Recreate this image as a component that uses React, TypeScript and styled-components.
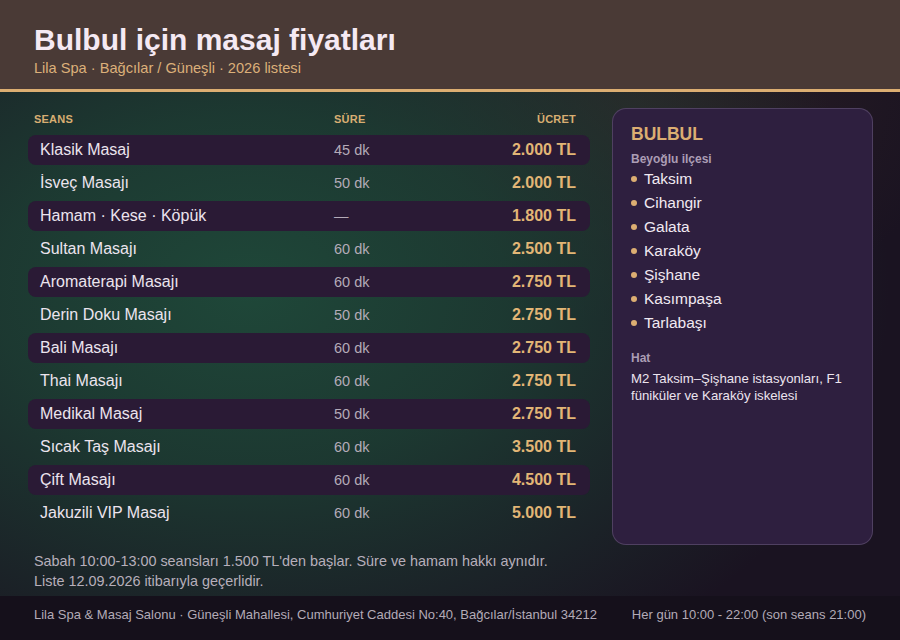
import React from 'react';
import styled, { createGlobalStyle } from 'styled-components';

const GlobalStyle = createGlobalStyle`
  html, body {
    margin: 0;
    padding: 0;
    background: #17111d;
  }
  * {
    box-sizing: border-box;
  }
`;

const Page = styled.div`
  width: 900px;
  height: 640px;
  display: flex;
  flex-direction: column;
  font-family: 'Liberation Sans', Arial, sans-serif;
  color: #ece4ee;
  background:
    radial-gradient(ellipse 640px 440px at 250px 290px, rgba(31, 74, 58, 0.95) 0%, rgba(29, 66, 53, 0.8) 40%, rgba(26, 19, 33, 0) 100%),
    radial-gradient(ellipse 320px 220px at 640px 100px, rgba(58, 42, 40, 0.55) 0%, rgba(26, 19, 33, 0) 100%),
    #1a1321;
  overflow: hidden;
`;

const Header = styled.header`
  height: 92px;
  padding: 23px 34px 0;
  background: #4a3a36;
  border-bottom: 3px solid #dcae72;
`;

const Title = styled.h1`
  margin: 0;
  font-size: 30px;
  line-height: 34px;
  font-weight: 700;
  color: #f5e9f3;
`;

const Subtitle = styled.p`
  margin: 2px 0 0;
  font-size: 14.6px;
  line-height: 18px;
  color: #dcb07a;
`;

const Main = styled.main`
  flex: 1;
  padding: 16px 27px 0 28px;
  display: flex;
  flex-direction: column;
`;

const Columns = styled.div`
  display: grid;
  grid-template-columns: 562px 261px;
  gap: 22px;
  align-items: start;
`;

const Table = styled.div`
  display: flex;
  flex-direction: column;
  gap: 3px;
`;

const HeadRow = styled.div`
  display: grid;
  grid-template-columns: 300px 1fr auto;
  align-items: center;
  height: 21px;
  margin-bottom: 3px;
  padding: 0 14px 0 6px;
`;

const HeadCell = styled.span<{ $right?: boolean }>`
  font-size: 11px;
  font-weight: 700;
  letter-spacing: 0.02em;
  color: #d8ae72;
  text-align: ${p => (p.$right ? 'right' : 'left')};
`;

const Row = styled.div<{ $striped: boolean }>`
  display: grid;
  grid-template-columns: 294px 1fr auto;
  align-items: center;
  height: 30px;
  padding: 0 14px 0 12px;
  border-radius: 8px;
  background: ${p => (p.$striped ? '#2a1a35' : 'transparent')};
`;

const Name = styled.span`
  font-size: 16px;
  color: #ece4ee;
`;

const Duration = styled.span`
  font-size: 14.5px;
  color: #b4abb8;
`;

const Price = styled.span`
  font-size: 16px;
  font-weight: 700;
  color: #e2b676;
  text-align: right;
`;

const Card = styled.aside`
  height: 437px;
  padding: 14px 18px 16px;
  border-radius: 14px;
  background: #2e1f3f;
  border: 1px solid rgba(200, 180, 220, 0.22);
`;

const CardTitle = styled.h2`
  margin: 0;
  font-size: 17.5px;
  line-height: 22px;
  font-weight: 700;
  color: #dcae72;
`;

const CardLabel = styled.div<{ $gap?: number }>`
  margin-top: ${p => p.$gap ?? 0}px;
  font-size: 12px;
  line-height: 16px;
  font-weight: 700;
  color: #ab9db5;
`;

const Areas = styled.ul`
  list-style: none;
  margin: 0;
  padding: 0;
  display: flex;
  flex-direction: column;
`;

const Area = styled.li`
  display: flex;
  align-items: center;
  gap: 8px;
  height: 24px;
  font-size: 15.5px;
  color: #f1e9f2;

  &::before {
    content: '';
    width: 6px;
    height: 6px;
    margin-right: -1px;
    border-radius: 50%;
    background: #dcae72;
  }
`;

const LineText = styled.p`
  margin: 4px 0 0;
  font-size: 13.2px;
  line-height: 17px;
  color: #ece4ee;
`;

const Note = styled.p`
  margin: 6px 0 0 6px;
  font-size: 14.4px;
  line-height: 20px;
  color: #b7afbb;
`;

const Footer = styled.footer`
  height: 44px;
  padding: 0 34px 8px;
  display: flex;
  align-items: center;
  justify-content: space-between;
  background: #15101b;
  font-size: 13px;
  color: #b3abb7;
`;

const sessions = [
  { name: 'Klasik Masaj', dur: '45 dk', price: '2.000 TL' },
  { name: 'İsveç Masajı', dur: '50 dk', price: '2.000 TL' },
  { name: 'Hamam · Kese · Köpük', dur: '—', price: '1.800 TL' },
  { name: 'Sultan Masajı', dur: '60 dk', price: '2.500 TL' },
  { name: 'Aromaterapi Masajı', dur: '60 dk', price: '2.750 TL' },
  { name: 'Derin Doku Masajı', dur: '50 dk', price: '2.750 TL' },
  { name: 'Bali Masajı', dur: '60 dk', price: '2.750 TL' },
  { name: 'Thai Masajı', dur: '60 dk', price: '2.750 TL' },
  { name: 'Medikal Masaj', dur: '50 dk', price: '2.750 TL' },
  { name: 'Sıcak Taş Masajı', dur: '60 dk', price: '3.500 TL' },
  { name: 'Çift Masajı', dur: '60 dk', price: '4.500 TL' },
  { name: 'Jakuzili VIP Masaj', dur: '60 dk', price: '5.000 TL' },
];

const areas = ['Taksim', 'Cihangir', 'Galata', 'Karaköy', 'Şişhane', 'Kasımpaşa', 'Tarlabaşı'];

export default function App() {
  return (
    <Page>
      <GlobalStyle />
      <Header>
        <Title>Bulbul için masaj fiyatları</Title>
        <Subtitle>Lila Spa · Bağcılar / Güneşli · 2026 listesi</Subtitle>
      </Header>

      <Main>
        <Columns>
          <Table>
            <HeadRow>
              <HeadCell>SEANS</HeadCell>
              <HeadCell>SÜRE</HeadCell>
              <HeadCell $right>ÜCRET</HeadCell>
            </HeadRow>
            {sessions.map((s, i) => (
              <Row key={s.name} $striped={i % 2 === 0}>
                <Name>{s.name}</Name>
                <Duration>{s.dur}</Duration>
                <Price>{s.price}</Price>
              </Row>
            ))}
          </Table>

          <Card>
            <CardTitle>BULBUL</CardTitle>
            <CardLabel $gap={6}>Beyoğlu ilçesi</CardLabel>
            <Areas>
              {areas.map(a => <Area key={a}>{a}</Area>)}
            </Areas>
            <CardLabel $gap={15}>Hat</CardLabel>
            <LineText>M2 Taksim–Şişhane istasyonları, F1 füniküler ve Karaköy iskelesi</LineText>
          </Card>
        </Columns>

        <Note>
          Sabah 10:00-13:00 seansları 1.500 TL'den başlar. Süre ve hamam hakkı aynıdır.
          <br />
          Liste 12.09.2026 itibarıyla geçerlidir.
        </Note>
      </Main>

      <Footer>
        <span>Lila Spa &amp; Masaj Salonu · Güneşli Mahallesi, Cumhuriyet Caddesi No:40, Bağcılar/İstanbul 34212</span>
        <span>Her gün 10:00 - 22:00 (son seans 21:00)</span>
      </Footer>
    </Page>
  );
}
